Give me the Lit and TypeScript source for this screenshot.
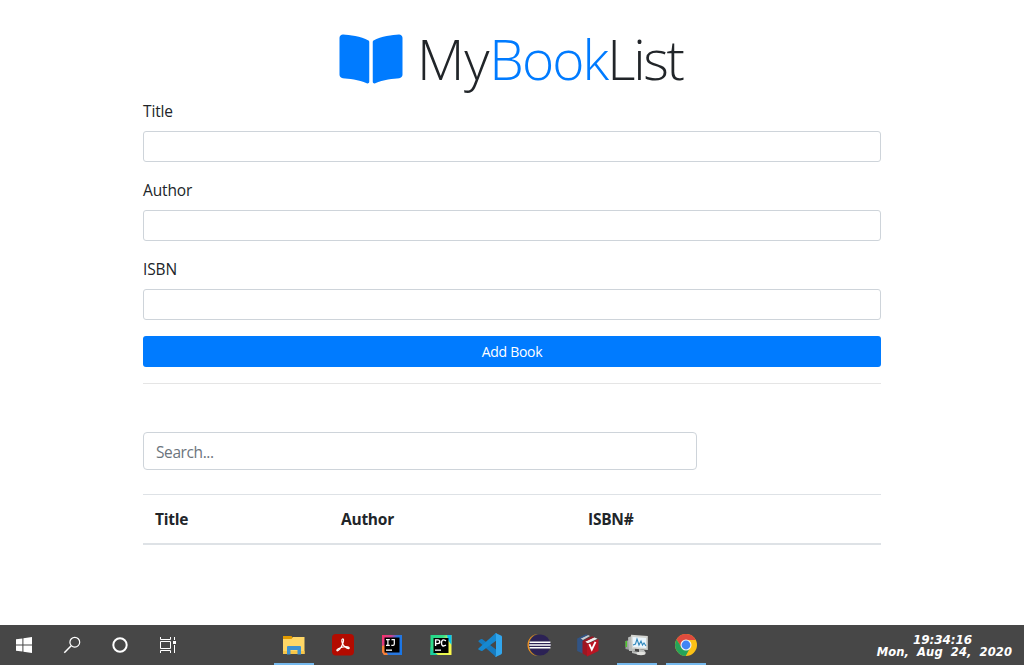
import { LitElement, html, css, svg } from "lit";
import { customElement } from "lit/decorators.js";

@customElement("app-taskbar")
class AppTaskbar extends LitElement {
  static styles = css`
    :host {
      display: grid;
      grid-template-columns: 48px 48px 48px 48px 77px repeat(9, 49px) 1fr;
      height: 40px;
      background: #474747;
      color: #fff;
    }
    .cell { position: relative; display: flex; align-items: center; justify-content: center; }
    .cell svg { display: block; width: 24px; height: 24px; }
    .active::after {
      content: ""; position: absolute; left: 5px; right: 4px; bottom: 0; height: 2px;
      background: #76b9ed;
    }
    .clock {
      display: flex; flex-direction: column; align-items: flex-end; justify-content: center;
      padding-right: 12px; padding-top: 2px;
      font: italic bold 11.5px/12px "DejaVu Sans", sans-serif;
      white-space: nowrap;
    }
    .time { padding-right: 40px; letter-spacing: -0.1px; font-size: 12px; }
    .date { letter-spacing: 0.1px; word-spacing: 4px; }
  `;

  render() {
    return html`
      <div class="cell">${this.icon(svg`<path fill="#fff" d="M4 6.3L10.4 5.4V11.5H4ZM11.4 5.2L20 4V11.5H11.4ZM4 12.5H10.4V18.6L4 17.7ZM11.4 12.5H20V20L11.4 18.8Z"/>`)}</div>
      <div class="cell">${this.icon(svg`<g fill="none" stroke="#fff"><circle cx="14.8" cy="9.2" r="4.9" stroke-width="1.2"/><path d="M11.2 12.8L4.3 19.7" stroke-width="1.5"/></g>`)}</div>
      <div class="cell">${this.icon(svg`<circle cx="12" cy="12" r="6.7" fill="none" stroke="#fff" stroke-width="2"/>`)}</div>
      <div class="cell">${this.icon(svg`<g fill="none" stroke="#fff"><path d="M4.5 4V6.5H14.5V4M4.5 20V17.5H14.5V20M4.5 8.5H14.5V15.5H4.5ZM18.5 4V7M18.5 12V20"/></g><path fill="#fff" d="M17 8h3v3h-3z"/>`)}</div>
      <div></div>
      <div class="cell active">${this.icon(svg`
        <path fill="#e29a00" d="M1 3H9.5L11 5V8H1Z"/>
        <path fill="#ffd766" d="M1 6H9.5L11 4H22.5V21H1Z"/>
        <path fill="#f7c648" d="M1 18H22.5V21H1Z"/>
        <path fill="#3e91d0" d="M5 21.5V14Q5 13 6 13H18Q19 13 19 14V21.5H15.5V17H8.5V21.5Z"/>`)}</div>
      <div class="cell">${this.icon(svg`
        <rect x="1" y="1" width="22" height="21.5" rx="4" fill="#b30b00"/>
        <path d="M11.5 6C13.2 5.6 12.5 8.7 11.3 11.7C10 15 7.4 18.3 6.1 17.7C4.8 16.8 8.5 14.7 12 14C15.5 13.3 18.7 14 18.2 15.2C17.4 16.4 14 14.3 12.2 11.8C10.8 9.8 10.2 6.6 11.5 6Z" fill="none" stroke="#fff" stroke-width="1.2"/>`)}</div>
      <div class="cell">${this.icon(svg`
        <defs><linearGradient id="ij" x1="0" y1="0" x2="1" y2=".6"><stop offset="0" stop-color="#fc3168"/><stop offset=".35" stop-color="#d0418c"/><stop offset=".6" stop-color="#2877df"/><stop offset="1" stop-color="#1876e8"/></linearGradient></defs>
        <path d="M2 2H22V22H4L2 19Z" fill="url(#ij)"/>
        <path d="M2 13L5 12V19.5H7L8 22H4L2 19Z" fill="#f98035"/>
        <path d="M8 22L7 19H20V22Z" fill="#2877df"/>
        <path d="M4.5 4.5h15v15h-15z" fill="#000"/>
        <path d="M6 6.7H9.8M7.9 6.7V12.3M6 12.3H9.8M11.5 6.7H14.3V11Q14.3 12.3 13 12.3H11.3" stroke="#fff" stroke-width="1.2" fill="none"/>
        <path d="M6 16.5h6v1.3H6z" fill="#fff"/>`)}</div>
      <div class="cell">${this.icon(svg`
        <defs><linearGradient id="pc" x1="0" y1="0" x2="1" y2=".8"><stop offset="0" stop-color="#21d789"/><stop offset=".4" stop-color="#35dc8a"/><stop offset=".6" stop-color="#d8f45a"/><stop offset="1" stop-color="#fcf84a"/></linearGradient></defs>
        <path d="M1.5 2H22.5V22H1.5Z" fill="url(#pc)"/>
        <path d="M18 2H22.5V12L19 7Z" fill="#07c3f2"/><path d="M1.5 14L5 19L9 22H1.5Z" fill="#19cfa0"/>
        <path d="M9 22L8 19H20V22Z" fill="#e8f64f"/>
        <path d="M4.5 5h15v15h-15z" fill="#000"/>
        <path d="M6.6 13V6.9H8.8Q10.8 6.9 10.8 8.8Q10.8 10.6 8.8 10.6H6.6M17 7.9Q12.5 5.2 12.5 10Q12.5 14.4 17 12.2" stroke="#fff" stroke-width="1.4" fill="none"/>
        <path d="M6 16.5h6v1.3H6z" fill="#fff"/>`)}</div>
      <div class="cell">${this.icon(svg`
        <path fill="#167bc0" d="M1.5 7.1L3.2 6Q4 5.8 4.5 6.2L19 17.2V23.6Q17.8 23.8 17 23L.4 8.4Q.2 7.7 1.5 7.1Z"/>
        <path fill="#1688d0" d="M.4 15.6L17 .8Q18 0 19 .4V7L4.5 17.8Q3.8 18.2 3 17.7L.6 16.7Q0 16.2 .4 15.6Z"/>
        <path fill="#31a6ed" d="M18 .2L23 2.6Q24 3.1 24 4V20Q24 21 23 21.4L18 23.8Q17.3 24 17 23.4Q18 23.2 18 22V2Q18 .8 17 .6Z"/>`)}</div>
      <div class="cell">${this.icon(svg`
        <circle cx="11.5" cy="12" r="11" fill="#f7941e"/>
        <circle cx="13" cy="12" r="11.2" fill="#474747"/>
        <circle cx="13" cy="12" r="10.6" fill="#2c2255"/>
        <path d="M2.5 9.3H23.4M2.2 12H23.7M2.5 14.7H23.4" stroke="#fff" stroke-width="1.5"/>`)}</div>
      <div class="cell">${this.icon(svg`
        <path fill="#c9ccd2" d="M4 5.5L12 2L14 3L7 7Z"/>
        <path fill="#315485" d="M1.2 5.5L10 1.2L12 2L4.5 5.8L8 8V21L1.2 18Z"/>
        <path fill="#eee" d="M8.5 8.8L18 4.2L21.5 5.8L11.5 10.5Z"/>
        <path fill="#9d1722" d="M6.5 8L16 3.2L18.5 4.2L9.2 8.8L12 10.5V23.5L6.5 20.5Z"/>
        <path fill="#b91422" d="M11 11L22.5 6V18L11 23.5Z"/>
        <path d="M13.3 11.2L15.8 16.6L19.5 8.8" fill="none" stroke="#fff" stroke-width="1.9"/>`)}</div>
      <div class="cell active">${this.icon(svg`
        <path fill="#9b9e9e" d="M.5 8L5 7V17L.5 16Z"/><path fill="#4fc52b" d="M.5 8h1.5v6H.5z"/>
        <path fill="#b8bbb9" d="M3 4.5L9 2L10 18L4 18Z"/>
        <path fill="#d3d5d1" d="M6 1.8L22.8 3V17L7 15.5Z"/>
        <path fill="#eaf5fc" d="M7.5 4L21 5V15L8 14Z"/>
        <path d="M8 12L10.5 11L12 6L14 12L16 8L17.5 12L19 10L21 13" fill="none" stroke="#2e87bc" stroke-width="1.1"/>
        <path fill="#bdbfbd" d="M14 16L19 17L21 20L15 22L7 20V18L14 19Z"/>
        <ellipse cx="16" cy="20.5" rx="4.5" ry="1.7" fill="#e2e2df"/>`)}</div>
      <div class="cell active">${this.icon(svg`
        <circle cx="12" cy="12" r="11" fill="#fbc116"/>
        <path fill="#df4b3e" d="M2.5 6.5A11 11 0 0 1 21.8 7H12L7.5 14.5Z"/>
        <path fill="#25a35a" d="M2.5 6.5L7.7 14.5L12 17L16 15L11.7 23A11 11 0 0 1 2.5 6.5Z"/>
        <circle cx="12" cy="12" r="5.5" fill="#f3f3f3"/><circle cx="12" cy="12" r="4.4" fill="#4285f4"/>`)}</div>
      <div class="clock"><span class="time">19:34:16</span><span class="date">Mon, Aug 24, 2020</span></div>
    `;
  }

  private icon(shape: unknown) {
    return html`<svg viewBox="0 0 24 24">${shape}</svg>`;
  }
}

@customElement("app-root")
class AppRoot extends LitElement {
  static styles = css`
    :host {
      display: flex; flex-direction: column; height: 665px; overflow: hidden;
      background: #fff; color: #212529;
      font: 16px/24px "Open Sans", "Noto Sans", sans-serif;
    }
    * { box-sizing: border-box; }
    main { flex: 1; width: 738px; margin: 0 auto; padding-top: 25px; }
    h1 {
      display: flex; align-items: center; justify-content: center; gap: 14px;
      height: 67px; margin: 0 0 7px; font-size: 55px; font-weight: 300; line-height: 67px;
      white-space: nowrap;
    }
    h1 svg { width: 64px; height: 56px; fill: #007bff; }
    .name { width: 268px; letter-spacing: -0.2px; }
    .name b { font-weight: 300; color: #007bff; letter-spacing: -1.9px; }
    .name .end { letter-spacing: -2.4px; }
    .group { margin-bottom: 16px; }
    label { display: block; height: 24px; margin-bottom: 8px; font-size: 15.5px; letter-spacing: -0.15px; }
    input {
      display: block; width: 100%; height: 31px; padding: 4px 8px;
      border: 1px solid #ced4da; border-radius: 3px; background: #fff;
      font: inherit; color: #495057;
    }
    .search { width: 554px; height: 38px; padding: 7px 12px 5px; border-radius: 4px; font-size: 15.5px; letter-spacing: -0.4px; }
    .search::placeholder { color: #6c757d; opacity: 1; }
    button {
      display: block; width: 100%; height: 31px; padding: 0; border: 0; border-radius: 3px;
      background: #007bff; color: #fff; font: 14px/31px "Open Sans", sans-serif; letter-spacing: -0.3px;
    }
    hr { border: 0; border-top: 1px solid #e5e5e5; margin: 16px 0 48px; }
    table { width: 100%; margin-top: 24px; border-collapse: separate; border-spacing: 0; table-layout: fixed; }
    th {
      height: 51px; padding: 12px; text-align: left; font-size: 15.5px; font-weight: 700; line-height: 24px;
      border-top: 1px solid #dee2e6; border-bottom: 2px solid #dee2e6; letter-spacing: -0.25px;
    }
    .c1 { width: 186px; }
    .c2 { width: 247px; }
  `;

  render() {
    return html`
      <main>
        <h1>
          <svg viewBox="0 0 576 512"><path d="M542.22 32.05c-54.8 3.11-163.72 14.43-230.96 55.59-4.64 2.84-7.27 7.89-7.27 13.17v363.87c0 11.55 12.63 18.85 23.28 13.49 69.18-34.82 169.23-44.32 218.7-46.92 16.89-.89 30.02-14.43 30.02-30.66V62.75c.01-17.71-15.35-31.74-33.77-30.7zM264.73 87.64C197.5 46.48 88.58 35.17 33.78 32.05 15.36 31.01 0 45.04 0 62.75V400.6c0 16.24 13.13 29.78 30.02 30.66 49.49 2.6 149.59 12.11 218.77 46.95 10.62 5.35 23.21-1.94 23.21-13.46V100.63c0-5.29-2.62-10.14-7.27-12.99z"/></svg>
          <span class="name">My<b>Book</b><span class="end">List</span></span>
        </h1>
        ${["Title", "Author", "ISBN"].map(
          (name) => html`<div class="group"><label for=${name}>${name}</label><input id=${name} /></div>`
        )}
        <button>Add Book</button>
        <hr />
        <input class="search" placeholder="Search..." />
        <table>
          <tr><th class="c1">Title</th><th class="c2">Author</th><th>ISBN#</th></tr>
        </table>
      </main>
      <app-taskbar></app-taskbar>
    `;
  }
}
